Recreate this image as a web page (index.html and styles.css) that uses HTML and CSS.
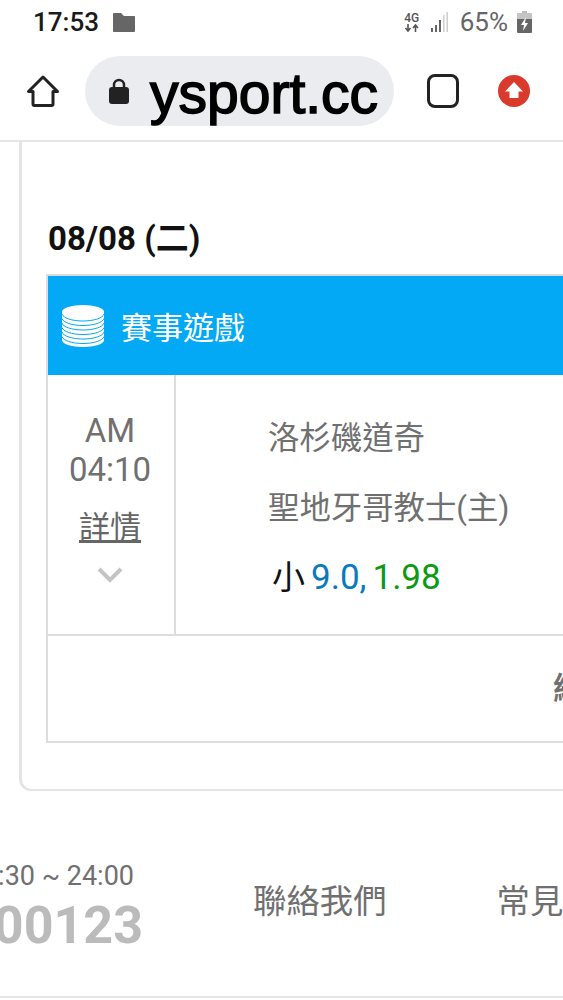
FILE: index.html
```html
<!DOCTYPE html>
<html lang="zh-Hant">
<head>
  <meta charset="utf-8">
  <meta name="viewport" content="width=device-width, initial-scale=1.0">
  <title>ysport.cc</title>
  <link rel="stylesheet" href="styles.css">
</head>
<body>
  <div class="status-bar">
    <span class="clock">17:53</span>
    <svg class="folder" viewBox="0 0 22 19"><path d="M1 0h7l3 3h10a1 1 0 0 1 1 1v14a1 1 0 0 1-1 1H1a1 1 0 0 1-1-1V1a1 1 0 0 1 1-1z" fill="#666"/></svg>
    <div class="status-right">
      <div class="net">
        <span class="net-label">4G</span>
        <svg class="net-arrows" viewBox="0 0 16 8"><path d="M4 0v6M1.500 4 4 7l2.500-3M11.500 8V2M9 4l2.500-3L14 4" fill="none" stroke="#555" stroke-width="1.600"/></svg>
      </div>
      <svg class="signal" viewBox="0 0 18 20"><path d="M1 20v-4h2v4zM5 20v-7h2v7zM9 20V8h2v12z" fill="#666"/><path d="M13 20V3h1.500v17zM16.500 20V0H18v20z" fill="#ccc"/></svg>
      <span class="battery-text">65%</span>
      <svg class="battery" viewBox="0 0 15 22"><path d="M5 0h5v2H5z" fill="#bbb"/><path d="M1 2h13a1 1 0 0 1 1 1v5H0V3a1 1 0 0 1 1-1z" fill="#c4c4c4"/><path d="M0 8h15v13a1 1 0 0 1-1 1H1a1 1 0 0 1-1-1z" fill="#666"/><path d="M9 6 4 14h3l-1 6 5-8H8z" fill="#fff"/></svg>
    </div>
  </div>

  <div class="toolbar">
    <svg class="home" viewBox="0 0 34 34"><path d="M17 3 2.500 17.500H7V30a1.500 1.500 0 0 0 1.500 1.500h17A1.500 1.500 0 0 0 27 30V17.500h4.500z" fill="none" stroke="#222" stroke-width="3" stroke-linejoin="round"/></svg>
    <div class="url-pill">
      <svg class="lock" viewBox="0 0 20 26"><path d="M5 11V7a5 5 0 0 1 10 0v4" fill="none" stroke="#222" stroke-width="2.500"/><rect x="0" y="9" width="20" height="17" rx="3" fill="#222"/></svg>
      <span class="url">ysport.cc</span>
    </div>
    <div class="tabs"></div>
    <div class="update">
      <svg viewBox="0 0 32 32"><circle cx="16" cy="16" r="16" fill="#d93a2b"/><path d="M16 7 25 16.500H20.500V23h-9v-6.500H7z" fill="#fff"/></svg>
    </div>
  </div>

  <main class="page">
    <section class="card">
      <h2 class="date">08/08 (二)</h2>
      <div class="game-table">
        <div class="game-head">
          <svg class="coins" viewBox="0 0 42 42">
            <path d="M0 7v28c0 4 9 7 21 7s21-3 21-7V7z" fill="#fff"/>
            <ellipse cx="21" cy="7" rx="21" ry="7" fill="#fff"/>
            <path d="M0 9c1 4 10 7 21 7s20-3 21-7M0 13.500c1 4 10 7 21 7s20-3 21-7M0 18c1 4 10 7 21 7s20-3 21-7M0 22.500c1 4 10 7 21 7s20-3 21-7M0 27c1 4 10 7 21 7s20-3 21-7M0 31.500c1 4 10 7 21 7s20-3 21-7" fill="none" stroke="#03a9f4" stroke-width="1"/>
          </svg>
          <span>賽事遊戲</span>
        </div>
        <div class="game-row">
          <div class="game-time">
            <div class="time-text">AM<br>04:10</div>
            <a class="detail" href="#">詳情</a>
            <svg class="chevron" viewBox="0 0 26 16"><path d="M2 2l11 11L24 2" fill="none" stroke="#c4c4c4" stroke-width="4"/></svg>
          </div>
          <div class="game-info">
            <div class="team">洛杉磯道奇</div>
            <div class="team">聖地牙哥教士(主)</div>
            <div class="odds">小<span class="odds-line">9.0,</span><span class="odds-rate">1.98</span></div>
          </div>
        </div>
        <div class="game-foot">總計</div>
      </div>
    </section>
  </main>

  <footer class="site-footer">
    <div class="service">
      <span class="service-time">09:30 ~ 24:00</span>
      <span class="service-num">00123</span>
    </div>
    <a class="foot-link" href="#">聯絡我們</a>
    <a class="foot-link" href="#">常見問題</a>
  </footer>
</body>
</html>
```
FILE: styles.css
```css
* {
  box-sizing: border-box;
  margin: 0;
  padding: 0;
}
html, body {
  height: 100%;
}
body {
  width: 563px;
  height: 1000px;
  overflow: hidden;
  display: flex;
  flex-direction: column;
  background: #fff;
  color: #707070;
  font-family: Roboto, "Noto Sans CJK TC", sans-serif;
}

/* status bar */
.status-bar {
  flex: none;
  height: 44px;
  display: flex;
  align-items: center;
  padding: 0 31px 0 33px;
}
.clock {
  font-size: 26px;
  font-weight: 500;
  color: #1a1a1a;
}
.folder {
  width: 22px;
  height: 19px;
  margin-left: 14px;
}
.status-right {
  margin-left: auto;
  display: flex;
  align-items: center;
}
.net {
  width: 16px;
  display: flex;
  flex-direction: column;
  align-items: center;
}
.net-label {
  font-size: 12px;
  line-height: 11px;
  font-weight: 500;
  color: #555;
}
.net-arrows {
  width: 16px;
  height: 8px;
}
.signal {
  width: 18px;
  height: 20px;
  margin-left: 10px;
}
.battery-text {
  margin-left: 12px;
  font-size: 26px;
  color: #666;
}
.battery {
  width: 15px;
  height: 22px;
  margin-left: 9px;
}

/* browser toolbar */
.toolbar {
  flex: none;
  height: 98px;
  display: flex;
  align-items: center;
  padding: 0 0 3px 26px;
  border-bottom: 2px solid #e6e6e6;
}
.home {
  width: 34px;
  height: 34px;
  flex: none;
}
.url-pill {
  flex: none;
  width: 309px;
  height: 70px;
  margin: 1px 0 0 25px;
  border-radius: 35px;
  background: #ebecf0;
  display: flex;
  align-items: center;
  padding-left: 24px;
  overflow: hidden;
}
.lock {
  width: 20px;
  height: 26px;
  flex: none;
}
.url {
  margin: 3px 0 0 21px;
  font-family: "Liberation Sans", sans-serif;
  font-size: 57px;
  line-height: 70px;
  color: #000;
  -webkit-text-stroke: 1.6px #000;
  white-space: nowrap;
}
.tabs {
  flex: none;
  width: 32px;
  height: 34px;
  margin-left: 33px;
  border: 3px solid #222;
  border-radius: 8px;
}
.update {
  flex: none;
  width: 32px;
  height: 32px;
  margin-left: 39px;
}
.update svg {
  display: block;
  width: 32px;
  height: 32px;
}

/* main card */
.page {
  flex: none;
  height: 649px;
  padding-left: 19px;
  overflow: hidden;
}
.card {
  width: 700px;
  height: 669px;
  margin-top: -20px;
  padding: 96px 0 0 24px;
  border: 2px solid #e4e4e4;
  border-left-width: 3px;
  border-radius: 12px;
}
.date {
  padding-left: 2px;
  font-size: 33px;
  line-height: 38px;
  font-weight: 700;
  color: #111;
}
.game-table {
  width: 900px;
  margin-top: 16px;
  border: 2px solid #ddd;
}
.game-head {
  height: 99px;
  display: flex;
  align-items: center;
  padding-left: 14px;
  background: #03a9f4;
  color: #fff;
  font-size: 31px;
}
.coins {
  width: 42px;
  height: 42px;
  margin-right: 17px;
}
.game-row {
  display: flex;
  height: 261px;
  border-bottom: 2px solid #ddd;
}
.game-time {
  flex: none;
  width: 128px;
  border-right: 2px solid #ddd;
  padding-top: 36px;
  padding-right: 2px;
  text-align: center;
}
.time-text {
  font-size: 33px;
  line-height: 39px;
}
.detail {
  display: block;
  margin-top: 18px;
  font-size: 31px;
  line-height: 42px;
  color: #666;
  text-decoration: underline;
}
.chevron {
  display: block;
  width: 26px;
  height: 16px;
  margin: 18px auto 0;
}
.game-info {
  padding: 41px 0 0 92px;
}
.team {
  font-size: 31.4px;
  line-height: 46px;
  margin-bottom: 24px;
}
.odds {
  font-size: 33px;
  line-height: 46px;
  margin-top: -1px;
  color: #111;
  white-space: nowrap;
  padding-left: 4px;
}
.odds-line {
  margin-left: 6px;
  font-size: 35px;
  color: #0a7abf;
}
.odds-rate {
  margin-left: 6px;
  font-size: 35px;
  color: #0a9a14;
}
.game-foot {
  height: 105px;
  line-height: 105px;
  padding-left: 505px;
  font-size: 31px;
  font-weight: 700;
}

/* footer */
.site-footer {
  flex: none;
  height: 207px;
  display: flex;
  align-items: center;
  padding-top: 10px;
  white-space: nowrap;
  border-bottom: 2px solid #e6e6e6;
}
.service {
  flex: none;
  width: 143px;
  margin-top: 20px;
  display: flex;
  flex-direction: column;
  align-items: flex-end;
}
.service-time {
  padding-right: 9px;
  font-size: 27px;
  line-height: 34px;
}
.service-num {
  font-size: 52px;
  line-height: 66px;
  font-weight: 700;
  color: #bbb;
}
.foot-link {
  flex: none;
  margin-left: 110px;
  font-size: 33.4px;
  color: #707070;
  text-decoration: none;
}
```
